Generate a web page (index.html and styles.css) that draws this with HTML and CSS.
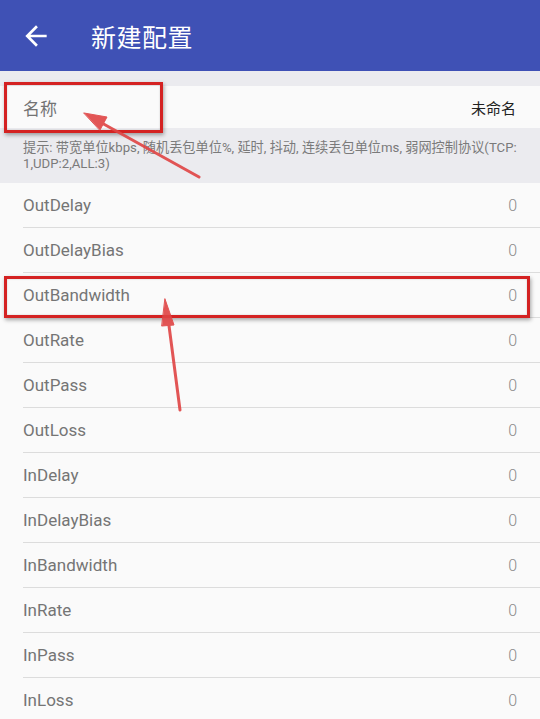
FILE: index.html
```html
<!DOCTYPE html>
<html lang="zh-CN">
<head>
  <meta charset="UTF-8">
  <title>新建配置</title>
  <link rel="stylesheet" href="styles.css">
</head>
<body>
  <header class="appbar">
    <svg class="back" viewBox="0 0 24 24" width="32" height="32">
      <path d="M20 11H7.83l5.59-5.59L12 4l-8 8 8 8 1.41-1.41L7.83 13H20v-2z" fill="#fff"/>
    </svg>
    <h1 class="title">新建配置</h1>
  </header>

  <div class="gap"></div>

  <div class="name-row">
    <span class="name-label">名称</span>
    <span class="name-value">未命名</span>
  </div>

  <div class="tip">提示: 带宽单位kbps, 随机丢包单位%, 延时, 抖动, 连续丢包单位ms, 弱网控制协议(TCP:<br>1,UDP:2,ALL:3)</div>

  <ul class="params">
    <li class="param"><span class="param-name">OutDelay</span><span class="param-value">0</span></li>
    <li class="param"><span class="param-name">OutDelayBias</span><span class="param-value">0</span></li>
    <li class="param"><span class="param-name">OutBandwidth</span><span class="param-value">0</span></li>
    <li class="param"><span class="param-name">OutRate</span><span class="param-value">0</span></li>
    <li class="param"><span class="param-name">OutPass</span><span class="param-value">0</span></li>
    <li class="param"><span class="param-name">OutLoss</span><span class="param-value">0</span></li>
    <li class="param"><span class="param-name">InDelay</span><span class="param-value">0</span></li>
    <li class="param"><span class="param-name">InDelayBias</span><span class="param-value">0</span></li>
    <li class="param"><span class="param-name">InBandwidth</span><span class="param-value">0</span></li>
    <li class="param"><span class="param-name">InRate</span><span class="param-value">0</span></li>
    <li class="param"><span class="param-name">InPass</span><span class="param-value">0</span></li>
    <li class="param"><span class="param-name">InLoss</span><span class="param-value">0</span></li>
  </ul>

  <!-- red annotations drawn over the screenshot -->
  <div class="mark mark-name"></div>
  <div class="mark mark-bandwidth"></div>
  <svg class="arrows" width="540" height="719" viewBox="0 0 540 719">
    <g fill="#e04444" stroke="#e04444" stroke-linecap="round" opacity="0.9">
      <line x1="199" y1="177" x2="100" y2="122" stroke-width="3"/>
      <polygon points="84,113 107,117 100,130" stroke-width="1"/>
      <line x1="180" y1="410" x2="168" y2="318" stroke-width="3"/>
      <polygon points="165,299 174,325 162,326" stroke-width="1"/>
    </g>
  </svg>
</body>
</html>
```

FILE: styles.css
```css
body {
  margin: 0;
  background-color: #fafafa;
  font-family: Roboto, "Noto Sans CJK SC", sans-serif;
  position: relative;
  overflow: hidden;
}
.appbar {
  height: 71px;
  background-color: #3f51b5;
  display: flex;
  align-items: center;
  padding-left: 20px;
}
.back {
  display: block;
}
.title {
  margin: 0 0 0 39px;
  color: #fff;
  font-size: 25px;
  font-weight: normal;
  letter-spacing: 0.5px;
}
.gap {
  height: 15px;
  background-color: #ebebef;
}
.name-row {
  height: 42px;
  background-color: #fafafa;
  display: flex;
  align-items: center;
  justify-content: space-between;
  padding: 0 24px 0 23px;
}
.name-label {
  font-size: 17px;
  color: #737373;
}
.name-value {
  font-size: 15px;
  color: #222;
}
.tip {
  background-color: #ebebef;
  color: #7a7a7a;
  font-size: 13.2px;
  line-height: 16px;
  padding: 12px 10px 11px 23px;
  white-space: nowrap;
}
.params {
  list-style: none;
  margin: 0;
  padding: 0;
}
.param {
  height: 44px;
  display: flex;
  align-items: center;
  justify-content: space-between;
  margin-left: 23px;
  padding-right: 23px;
  border-bottom: 1px solid #dcdcdc;
}
.param-name {
  font-size: 17px;
  color: #757575;
}
.param-value {
  font-size: 16px;
  font-weight: 300;
  color: #8a8a8a;
}
.mark {
  position: absolute;
  border: 3px solid #d42222;
  box-shadow: 1px 2px 4px rgba(0, 0, 0, 0.35), inset 0 0 2px rgba(0, 0, 0, 0.2);
}
.mark-name {
  left: 4px;
  top: 82px;
  width: 153px;
  height: 45px;
}
.mark-bandwidth {
  left: 4px;
  top: 276px;
  width: 520px;
  height: 36px;
}
.arrows {
  position: absolute;
  left: 0;
  top: 0;
}
```
